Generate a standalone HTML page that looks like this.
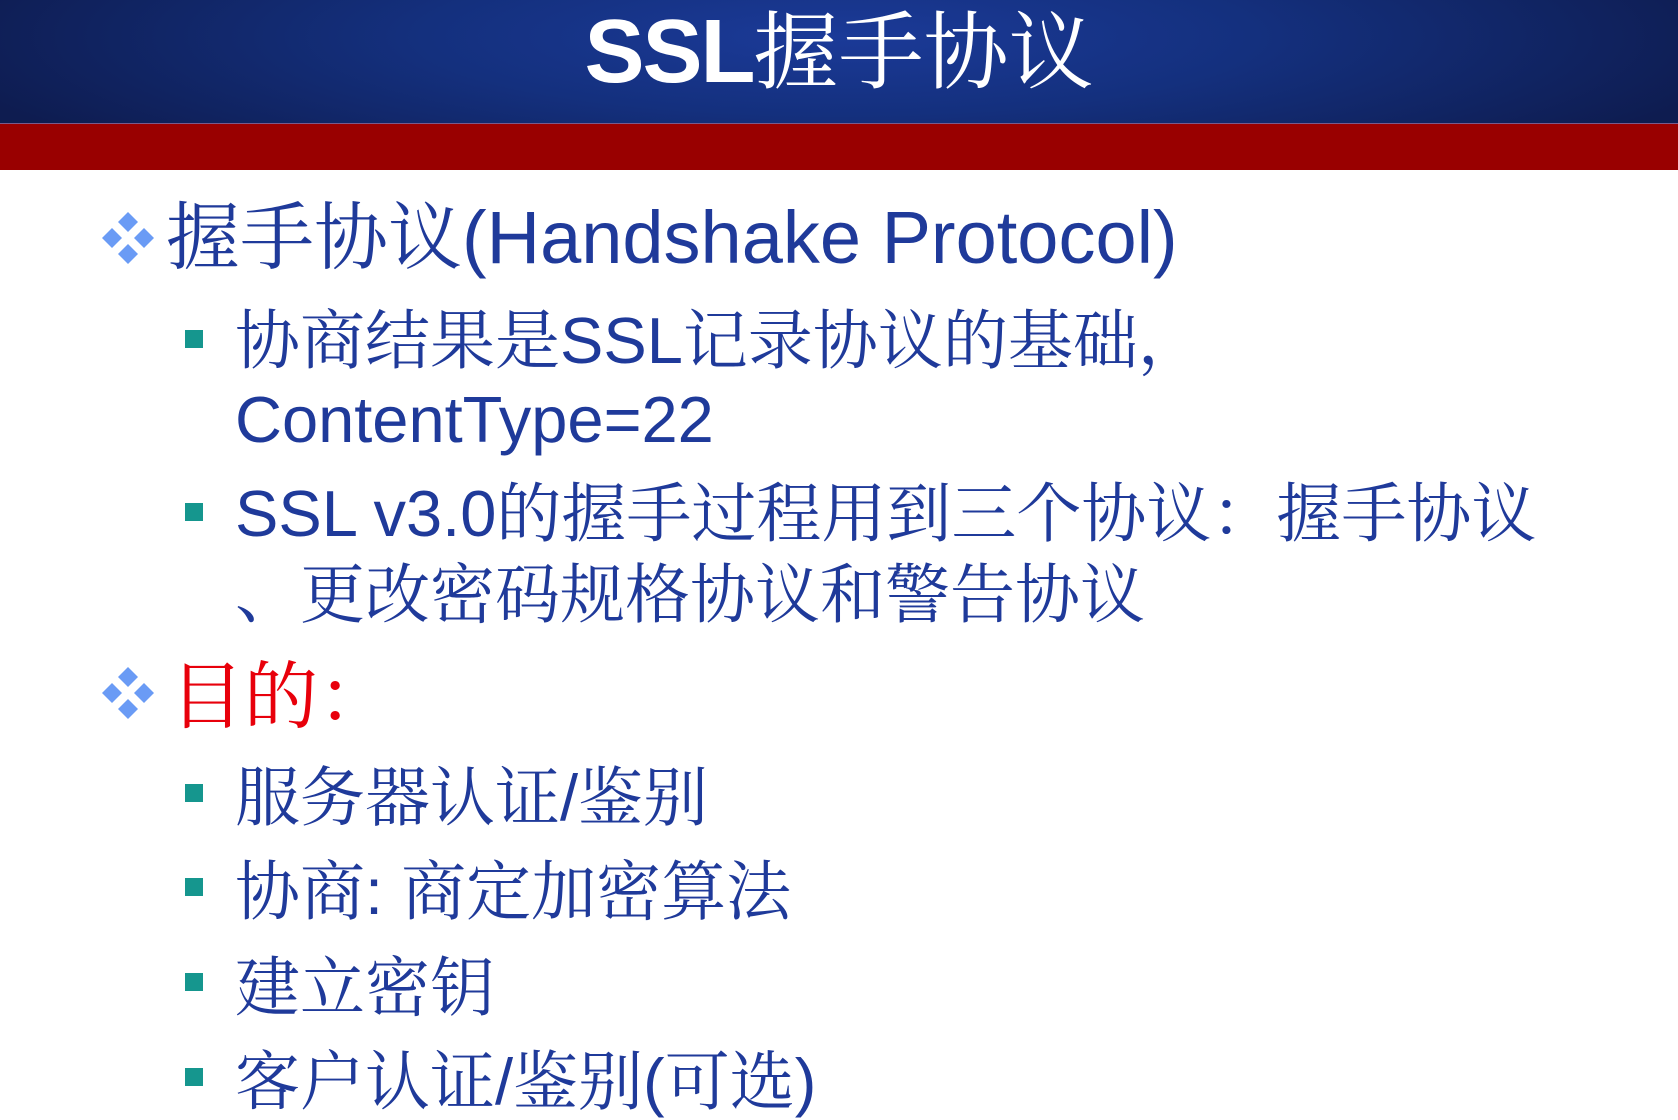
<!DOCTYPE html>
<html><head><meta charset="utf-8"><style>
html,body{margin:0;padding:0;}
body{width:1678px;height:1120px;position:relative;overflow:hidden;background:#fff;font-family:"Liberation Sans","Noto Serif CJK SC",serif;}
.hdr{position:absolute;left:0;top:0;width:1678px;height:123px;background:radial-gradient(ellipse 55% 140% at 50% 30%,#1b3a98 0%,#14307e 45%,#0e1c50 100%);}
.red{position:absolute;left:0;top:123px;width:1678px;height:46px;background:#990000;border-top:1px solid #7a5a8a;}
.title{position:absolute;left:0;width:1678px;top:7px;text-align:center;color:#fff;font-size:85px;line-height:1;white-space:nowrap;}
.title b{font-family:"Liberation Sans",sans-serif;font-weight:bold;font-size:90px;letter-spacing:-2px;}
.t{position:absolute;white-space:nowrap;line-height:1;color:#1f3a9a;}
.l1{font-size:74px;}
.l2{font-size:65px;}
.sq{position:absolute;width:18px;height:18px;background:#15968e;left:185px;}
.dm{position:absolute;left:100px;}
</style></head><body>
<div class="hdr"></div>
<div class="red"></div>
<div class="title"><b>SSL</b>握手协议</div>

<svg class="dm" style="top:210px" width="56" height="56" viewBox="0 0 56 56"><g fill="#6a9bf5"><polygon points="28,2 38,12 28,22 18,12"/><polygon points="28,34 38,44 28,54 18,44"/><polygon points="12,18 22,28 12,38 2,28"/><polygon points="44,18 54,28 44,38 34,28"/></g></svg>
<div class="t l1" style="left:166px;top:201px">握手协议(Handshake Protocol)</div>

<div class="sq" style="top:330px"></div>
<div class="t l2" style="left:235px;top:308px">协商结果是SSL记录协议的基础，</div>
<div class="t l2" style="left:235px;top:387px">ContentType=22</div>
<div class="sq" style="top:503px"></div>
<div class="t l2" style="left:235px;top:481px">SSL v3.0的握手过程用到三个协议：握手协议</div>
<div class="t l2" style="left:235px;top:562px">、更改密码规格协议和警告协议</div>

<svg class="dm" style="top:665px" width="56" height="56" viewBox="0 0 56 56"><g fill="#6a9bf5"><polygon points="28,2 38,12 28,22 18,12"/><polygon points="28,34 38,44 28,54 18,44"/><polygon points="12,18 22,28 12,38 2,28"/><polygon points="44,18 54,28 44,38 34,28"/></g></svg>
<div class="t l1" style="left:170px;top:660px;color:#e8000b">目的：</div>

<div class="sq" style="top:784px"></div>
<div class="t l2" style="left:235px;top:765px">服务器认证/鉴别</div>
<div class="sq" style="top:878px"></div>
<div class="t l2" style="left:235px;top:859px">协商: 商定加密算法</div>
<div class="sq" style="top:973px"></div>
<div class="t l2" style="left:235px;top:955px">建立密钥</div>
<div class="sq" style="top:1068px"></div>
<div class="t l2" style="left:235px;top:1049px">客户认证/鉴别(可选)</div>
</body></html>
